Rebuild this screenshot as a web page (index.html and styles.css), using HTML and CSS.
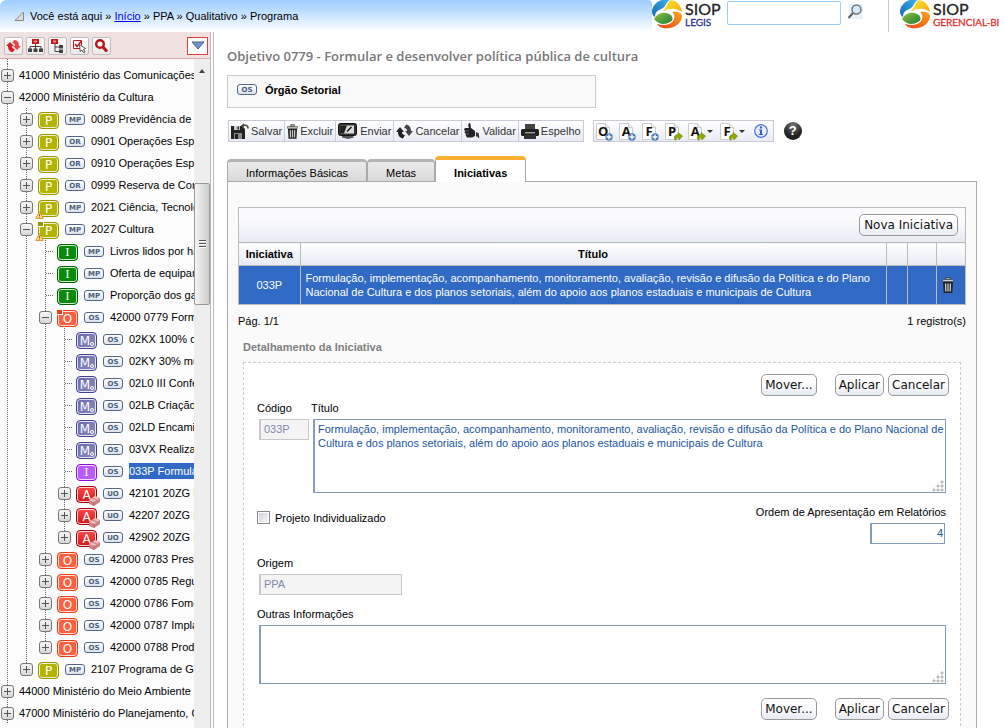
FILE: index.html
```html
<!DOCTYPE html>
<html lang="pt-BR">
<head>
<meta charset="utf-8">
<title>SIOP - Programa</title>
<link rel="stylesheet" href="styles.css">
</head>
<body>
<svg class="defs" aria-hidden="true">
  <defs>
    <linearGradient id="gBlue" x1="0" y1="1" x2="1" y2="0"><stop offset="0" stop-color="#1766b4"/><stop offset="1" stop-color="#39b6ea"/></linearGradient>
    <linearGradient id="gYellow" x1="0" y1="0" x2="1" y2="1"><stop offset="0" stop-color="#ffe93a"/><stop offset="1" stop-color="#f6a80e"/></linearGradient>
    <linearGradient id="gGreen" x1="0" y1="0" x2="1" y2="1"><stop offset="0" stop-color="#8cbf3a"/><stop offset="1" stop-color="#1f7f3a"/></linearGradient>
    <linearGradient id="gOrange" x1="1" y1="0" x2="0" y2="1"><stop offset="0" stop-color="#f9a51a"/><stop offset="1" stop-color="#e8401c"/></linearGradient>
    <symbol id="logo" viewBox="0 0 31 29">
      <path fill="url(#gBlue)" d="M18 0C9-2 1 3 0 11c0 3 1 5 3 6 0-6 4-7 8-9 3-2 3-6 7-8z"/>
      <path fill="url(#gYellow)" d="M19 0c6 1 10 5 11 12-4-3-8-4-12-3-3 0-5 2-7 2 3-2 4-9 8-11z"/>
      <path fill="url(#gGreen)" d="M2 19c3-5 9-8 15-5 4 2 5 6 1 8-5 3-11 3-16-3z"/>
      <path fill="url(#gOrange)" d="M20 12c5-1 10 1 10 4 0 7-8 14-19 12-3-1-5-2-6-4 7 2 13 1 16-3 2-3 2-7-1-9z"/>
    </symbol>
    <symbol id="trash" viewBox="0 0 12 16">
      <path fill="#bbb" stroke="#333" stroke-width=".8" d="M4 .6h4v2H4z"/><path fill="#ccc" stroke="#333" stroke-width=".6" d="M.5 2.500h11v2H.5z"/><path fill="#222" d="M1 5h10l-.7 11H1.700z"/><path stroke="#ccc" stroke-width="1.300" d="M3.600 6.500l.2 8M6 6.500v8M8.400 6.500l-.2 8"/>
    </symbol>
    <symbol id="warn" viewBox="0 0 9 8"><path fill="#ffe08a" stroke="#d99330" d="M4.500.8L8.300 7.400H.7z"/><path stroke="#a05a10" d="M4.500 3v2M4.500 5.600v1"/></symbol>
    <symbol id="brick" viewBox="0 0 11 10"><path fill="#cf8282" d="M0 4l6-4 5 2v4l-6 4-5-2z"/><path fill="#eebcbc" d="M0 4l6-4 5 2-6 4z"/><path fill="none" stroke="#b06060" stroke-width=".7" d="M5 6v4M3 2l5 2"/></symbol>
    <symbol id="page" viewBox="0 0 14 17"><path fill="#fff" stroke="#ccc" d="M.5.5h9l4 4v12H.5z"/><path fill="#eee" stroke="#ccc" d="M9.500.5v4h4"/></symbol>
    <symbol id="plus" viewBox="0 0 8 8"><circle cx="4" cy="4" r="3.700" fill="#4c79b5"/><path stroke="#fff" stroke-width="1.400" d="M4 1.500v5M1.500 4h5"/></symbol>
    <symbol id="arrow" viewBox="0 0 10 9"><path fill="#8aa800" stroke="#6b8500" stroke-width=".6" d="M5 .5L9.500 4 6 8V6C4 5.500 3 6.500 3 8.500 0 6 1 3 5 2.500z"/></symbol>
  </defs>
</svg>

<div class="page">
  <header class="top">
    <nav class="crumbs" aria-label="Você está aqui">
      <svg width="10" height="10" viewBox="0 0 10 10" aria-hidden="true"><path fill="#ddd" stroke="#888" d="M9.500 1v8.500H1z"/></svg>
      <span>Você está aqui » <a href="#">Início</a> » PPA » Qualitativo » Programa</span>
    </nav>
    <div class="brands">
      <a class="brand" href="#"><svg width="31" height="29" aria-hidden="true"><use href="#logo"/></svg><span class="brand-text">SIOP<small class="legis">LEGIS</small></span></a>
      <form class="search">
        <input type="text" aria-label="Pesquisar">
        <button type="button" aria-label="Buscar"><svg width="16" height="16" viewBox="0 0 16 16"><rect x="2" y="0" width="14" height="15" fill="#e6f2fc"/><circle cx="9.500" cy="5.500" r="4.500" fill="#d4eafb" stroke="#777" stroke-width="1.500"/><path stroke="#666" stroke-width="2.200" d="M6 9l-4.500 5"/></svg></button>
      </form>
      <a class="brand bi" href="#"><svg width="31" height="29" aria-hidden="true"><use href="#logo"/></svg><span class="brand-text">SIOP<small class="gerencial">GERENCIAL-BI</small></span></a>
    </div>
  </header>

  <div class="body">
    <aside class="side">
      <div class="side-bar">
        <button type="button" aria-label="Atualizar"><svg width="15" height="14" viewBox="0 0 15 14"><path fill="#d51f26" d="M0 7l4-4 4 4H6c0 2 1 3 3 3l-2 3C4 13 2 11 2 7z"/><path fill="#e2484d" d="M15 7l-4 4-4-4h2c0-2-1-3-3-3l2-3c3 0 5 2 5 6z"/></svg></button>
        <button type="button" aria-label="Expandir"><svg width="15" height="14" viewBox="0 0 15 14"><path fill="#c4161c" d="M4 0h7v5H4z"/><path stroke="#444" fill="none" d="M7.500 5v5M2 10V7.500h11V10"/><path fill="#444" d="M0 9.500h4V13H0zM5.500 9.500h4V13h-4zM11 9.500h4V13h-4z"/><path fill="#f08a8a" d="M6 1.500h3v2H6z"/></svg></button>
        <button type="button" aria-label="Recolher"><svg width="15" height="14" viewBox="0 0 15 14"><path fill="#c4161c" d="M1 0h7v5H1z"/><path stroke="#444" fill="none" d="M5 5v7.500h4M5 8h4"/><path fill="#444" d="M9 6h4v3.500H9zM9 10.500h4V14H9z"/><path fill="#f08a8a" d="M3 1.500h3v2H3z"/></svg></button>
        <button type="button" aria-label="Selecionar"><svg width="15" height="14" viewBox="0 0 15 14"><path fill="#fff" stroke="#c4161c" d="M1.500 1.500h8v8h-8z"/><path fill="none" stroke="#c4161c" stroke-width="1.600" d="M3 5l2 2.500L9.500 2"/><path fill="#fff" stroke="#333" stroke-width=".8" d="M7.500 5.500l6 4-2 .8 1.500 2.700-1.500.7-1.500-2.700-1.800 1.500z"/></svg></button>
        <button type="button" aria-label="Procurar"><svg width="15" height="14" viewBox="0 0 15 14"><circle cx="6" cy="5" r="3.800" fill="#fff" stroke="#b81218" stroke-width="2.400"/><path stroke="#b81218" stroke-width="3" d="M9 8l4 4.500"/></svg></button>
        <button type="button" class="menu" aria-label="Opções"><svg width="14" height="9" viewBox="0 0 14 9"><path fill="#6f95cf" stroke="#50617c" d="M1 1h12L7 8z"/></svg></button>
      </div>
      <div class="side-main">
        <ul class="tree">
          <li><div class="row"><button type="button" class="tg plus" aria-label="Expandir"></button><a href="#">41000 Ministério das Comunicações</a></div></li>
          <li><div class="row"><button type="button" class="tg" aria-label="Recolher"></button><a href="#">42000 Ministério da Cultura</a></div>
            <ul>
              <li><div class="row"><button type="button" class="tg plus" aria-label="Expandir"></button><b class="ic p">P</b><i class="tag">MP</i><a href="#">0089 Previdência de Inativos</a></div></li>
              <li><div class="row"><button type="button" class="tg plus" aria-label="Expandir"></button><b class="ic p">P</b><i class="tag">OR</i><a href="#">0901 Operações Especiais</a></div></li>
              <li><div class="row"><button type="button" class="tg plus" aria-label="Expandir"></button><b class="ic p">P</b><i class="tag">OR</i><a href="#">0910 Operações Especiais</a></div></li>
              <li><div class="row"><button type="button" class="tg plus" aria-label="Expandir"></button><b class="ic p">P</b><i class="tag">OR</i><a href="#">0999 Reserva de Contingência</a></div></li>
              <li><div class="row"><button type="button" class="tg plus" aria-label="Expandir"></button><b class="ic p">P<svg class="warn"><use href="#warn"/></svg></b><i class="tag">MP</i><a href="#">2021 Ciência, Tecnologia</a></div></li>
              <li><div class="row"><button type="button" class="tg" aria-label="Recolher"></button><b class="ic p open">P<svg class="warn"><use href="#warn"/></svg></b><i class="tag">MP</i><a href="#">2027 Cultura</a></div>
                <ul>
                  <li class="leaf"><div class="row"><b class="ic g">I</b><i class="tag">MP</i><a href="#">Livros lidos por habitante</a></div></li>
                  <li class="leaf"><div class="row"><b class="ic g">I</b><i class="tag">MP</i><a href="#">Oferta de equipamentos</a></div></li>
                  <li class="leaf"><div class="row"><b class="ic g">I</b><i class="tag">MP</i><a href="#">Proporção dos gastos</a></div></li>
                  <li><div class="row"><button type="button" class="tg" aria-label="Recolher"></button><b class="ic o open">O</b><i class="tag">OS</i><a href="#">42000 0779 Formular</a></div>
                    <ul>
                      <li class="leaf"><div class="row"><b class="ic m">M</b><i class="tag">OS</i><a href="#">02KX 100% dos</a></div></li>
                      <li class="leaf"><div class="row"><b class="ic m">M</b><i class="tag">OS</i><a href="#">02KY 30% municípios</a></div></li>
                      <li class="leaf"><div class="row"><b class="ic m">M</b><i class="tag">OS</i><a href="#">02L0 III Conferência</a></div></li>
                      <li class="leaf"><div class="row"><b class="ic m">M</b><i class="tag">OS</i><a href="#">02LB Criação</a></div></li>
                      <li class="leaf"><div class="row"><b class="ic m">M</b><i class="tag">OS</i><a href="#">02LD Encaminhar</a></div></li>
                      <li class="leaf"><div class="row"><b class="ic m">M</b><i class="tag">OS</i><a href="#">03VX Realização</a></div></li>
                      <li class="leaf"><div class="row"><b class="ic i">I</b><i class="tag">OS</i><a href="#" class="sel">033P Formulação</a></div></li>
                      <li><div class="row"><button type="button" class="tg plus" aria-label="Expandir"></button><b class="ic a">A<svg class="brick"><use href="#brick"/></svg></b><i class="tag">UO</i><a href="#">42101 20ZG Formulação</a></div></li>
                      <li><div class="row"><button type="button" class="tg plus" aria-label="Expandir"></button><b class="ic a">A<svg class="brick"><use href="#brick"/></svg></b><i class="tag">UO</i><a href="#">42207 20ZG Formulação</a></div></li>
                      <li><div class="row"><button type="button" class="tg plus" aria-label="Expandir"></button><b class="ic a">A<svg class="brick"><use href="#brick"/></svg></b><i class="tag">UO</i><a href="#">42902 20ZG Formulação</a></div></li>
                    </ul>
                  </li>
                  <li><div class="row"><button type="button" class="tg plus" aria-label="Expandir"></button><b class="ic o">O</b><i class="tag">OS</i><a href="#">42000 0783 Preservar</a></div></li>
                  <li><div class="row"><button type="button" class="tg plus" aria-label="Expandir"></button><b class="ic o">O</b><i class="tag">OS</i><a href="#">42000 0785 Regular</a></div></li>
                  <li><div class="row"><button type="button" class="tg plus" aria-label="Expandir"></button><b class="ic o">O</b><i class="tag">OS</i><a href="#">42000 0786 Fomentar</a></div></li>
                  <li><div class="row"><button type="button" class="tg plus" aria-label="Expandir"></button><b class="ic o">O</b><i class="tag">OS</i><a href="#">42000 0787 Implantar</a></div></li>
                  <li><div class="row"><button type="button" class="tg plus" aria-label="Expandir"></button><b class="ic o">O</b><i class="tag">OS</i><a href="#">42000 0788 Produzir</a></div></li>
                </ul>
              </li>
              <li><div class="row"><button type="button" class="tg plus" aria-label="Expandir"></button><b class="ic p">P</b><i class="tag">MP</i><a href="#">2107 Programa de Gestão</a></div></li>
            </ul>
          </li>
          <li><div class="row"><button type="button" class="tg plus" aria-label="Expandir"></button><a href="#">44000 Ministério do Meio Ambiente</a></div></li>
          <li><div class="row"><button type="button" class="tg plus" aria-label="Expandir"></button><a href="#">47000 Ministério do Planejamento, Orçamento</a></div></li>
        </ul>
        <div class="scroll" aria-hidden="true">
          <span class="up"></span>
          <span class="thumb"><span class="grip"></span></span>
        </div>
      </div>
    </aside>

    <main class="main">
      <h1>Objetivo 0779 - Formular e desenvolver política pública de cultura</h1>
      <div class="org"><i class="tag">OS</i><strong>Órgão Setorial</strong></div>

      <div class="bars">
        <div class="bar">
          <button type="button"><svg width="18" height="16" viewBox="0 0 18 16"><path fill="#222" d="M0 3h11l3 3v10H0z"/><path fill="#ccc" d="M3 3h6v4H3z"/><path fill="#222" d="M6.500 3.500h1.500v3H6.500z"/><path fill="#888" d="M3 10h8v6H3z"/><path fill="#222" d="M4 11h3v5H4z"/><path fill="none" stroke="#555" stroke-width="1.800" d="M12 2.500c3-1 5 0 5 3"/><path fill="#555" d="M9.500 3L13 0v5z"/></svg>Salvar</button>
          <button type="button"><svg width="11" height="15"><use href="#trash"/></svg>Excluir</button>
          <button type="button"><svg width="20" height="16" viewBox="0 0 20 16"><rect x=".5" y=".5" width="18" height="12" rx="2" fill="#333" stroke="#111"/><rect x="3" y="2.500" width="13" height="8" fill="#ddd"/><path fill="#222" d="M3 2.500h6l-3 8H3z"/><path stroke="#111" stroke-width="1.500" d="M9 8.500L13.500 4"/><path fill="#555" d="M4 13h11l1 1.500-6 1.500-6-1.500z"/></svg>Enviar</button>
          <button type="button"><svg width="17" height="15" viewBox="0 0 17 15"><path fill="#222" d="M0 8l4-5 4 5H6c0 2 1 3 3 3l-2 3.500C4 14 2 12 2 8z"/><path fill="#444" d="M17 7l-4 5-4-5h2c0-2-1-3-3-3l2-3.500c3 .5 5 2.500 5 6.500z"/></svg>Cancelar</button>
          <button type="button"><svg width="16" height="16" viewBox="0 0 16 16"><path fill="#222" d="M5 0c2 0 1.500 3 2 5l4 3v5l-3 1.500H3L1.500 12l.5-1-1.500-1.500L1 8 0 6.500 1 5h4C4 3 4 1 5 0z"/><path fill="#333" d="M12 9l2.500 1 .8 4-1 1.500-.8-2h-1.500z"/><path stroke="#888" stroke-width=".6" d="M1 8h4M2 11h3"/></svg>Validar</button>
          <button type="button"><svg width="18" height="15" viewBox="0 0 18 15"><path fill="#444" d="M4 0h10v5H4z"/><rect x="0" y="5" width="18" height="7" rx="1.500" fill="#222"/><path fill="#999" d="M4 8h10v1.500H4z"/><path fill="#333" d="M3 11h12v4H3z"/></svg>Espelho</button>
        </div>
        <div class="bar docs">
          <button type="button" class="doc"><svg width="14" height="17"><use href="#page"/></svg><b>O</b><svg class="mark"><use href="#plus"/></svg></button>
          <button type="button" class="doc"><svg width="14" height="17"><use href="#page"/></svg><b>A</b><svg class="mark"><use href="#plus"/></svg></button>
          <button type="button" class="doc"><svg width="14" height="17"><use href="#page"/></svg><b>F</b><svg class="mark"><use href="#plus"/></svg></button>
          <button type="button" class="doc"><svg width="14" height="17"><use href="#page"/></svg><b>P</b><svg class="mark go"><use href="#arrow"/></svg></button>
          <button type="button" class="doc drop"><svg width="14" height="17"><use href="#page"/></svg><b>A</b><svg class="mark go"><use href="#arrow"/></svg></button>
          <button type="button" class="doc drop"><svg width="14" height="17"><use href="#page"/></svg><b>F</b><svg class="mark go"><use href="#arrow"/></svg></button>
          <button type="button" class="info" aria-label="Informações"><svg width="14" height="14" viewBox="0 0 14 14"><circle cx="7" cy="7" r="6.300" fill="#e9edf8" stroke="#4a6fe0" stroke-width="1.200"/><path fill="#2f5be0" d="M6 2.500h2v2H6zM5 5.500h3V10h1v1H5v-1h1V6.500H5z"/></svg></button>
        </div>
        <button type="button" class="help" aria-label="Ajuda">?</button>
      </div>

      <nav class="tabs">
        <button type="button">Informações Básicas</button>
        <button type="button">Metas</button>
        <button type="button" class="on">Iniciativas</button>
      </nav>

      <section class="panel">
        <div class="grid">
          <div class="grid-top"><button type="button" class="btn">Nova Iniciativa</button></div>
          <table>
            <colgroup><col class="c-code"><col><col class="c-a"><col class="c-b"><col class="c-b"></colgroup>
            <thead><tr><th>Iniciativa</th><th>Título</th><th></th><th></th><th></th></tr></thead>
            <tbody><tr>
              <td class="code">033P</td>
              <td class="name">Formulação, implementação, acompanhamento, monitoramento, avaliação, revisão e difusão da Política e do Plano Nacional de Cultura e dos planos setoriais, além do apoio aos planos estaduais e municipais de Cultura</td>
              <td></td><td></td>
              <td class="del"><button type="button" aria-label="Excluir iniciativa"><svg width="12" height="16"><use href="#trash"/></svg></button></td>
            </tr></tbody>
          </table>
        </div>
        <div class="pager"><span>Pág. 1/1</span><span>1 registro(s)</span></div>

        <h2>Detalhamento da Iniciativa</h2>
        <form class="detail">
          <div class="actions"><button type="button" class="btn away">Mover...</button><button type="button" class="btn">Aplicar</button><button type="button" class="btn">Cancelar</button></div>
          <div class="line first">
            <div class="field code-field"><label for="codigo">Código</label><input id="codigo" type="text" value="033P" disabled></div>
            <div class="field grow"><label for="titulo">Título</label><span class="area"><textarea id="titulo" class="tall">Formulação, implementação, acompanhamento, monitoramento, avaliação, revisão e difusão da Política e do Plano Nacional de Cultura e dos planos setoriais, além do apoio aos planos estaduais e municipais de Cultura</textarea></span></div>
          </div>
          <div class="line spread">
            <label class="check"><input type="checkbox">Projeto Individualizado</label>
            <div class="field order"><label for="ordem">Ordem de Apresentação em Relatórios</label><input id="ordem" type="text" value="4"></div>
          </div>
          <div class="line"><div class="field origin"><label for="origem">Origem</label><input id="origem" type="text" value="PPA" disabled></div></div>
          <div class="line"><div class="field grow"><label for="outras">Outras Informações</label><span class="area"><textarea id="outras" class="short"></textarea></span></div></div>
          <div class="actions bottom"><button type="button" class="btn away">Mover...</button><button type="button" class="btn">Aplicar</button><button type="button" class="btn">Cancelar</button></div>
        </form>
      </section>
    </main>
  </div>
</div>
</body>
</html>
```
FILE: styles.css
```css
*, *::before, *::after { box-sizing: border-box; }
body { margin: 0; background: #fff; color: #000; font: 11px/14px "Liberation Sans", Arial, sans-serif; }
button, input, textarea { font: inherit; margin: 0; border-radius: 0; }
button { padding: 0; border: 0; background: none; color: inherit; }
svg { display: block; flex: none; }
.defs { position: absolute; width: 0; height: 0; }

.page { display: flex; flex-direction: column; height: 100vh; overflow: hidden; }

/* Header */
.top { display: flex; flex: none; height: 32px; }
.crumbs { flex: 1; display: flex; align-items: center; gap: 6px; padding-left: 14px; border-radius: 6px 4px 0 0; background: linear-gradient(#9dcdff, #a9d3ff 15%, #fff); }
.crumbs a { color: #00f; }
.brands { display: flex; align-items: flex-start; width: 352px; }
.brand { display: flex; gap: 2px; color: #222; text-decoration: none; }
.brand-text { display: flex; flex-direction: column; padding-top: 1px; font: 16px/16px Lato, sans-serif; -webkit-text-stroke: 0.3px; }
.brand-text small { font-size: 10px; line-height: 10px; }
.legis { color: #2b2f9c; }
.gerencial { color: #e8322d; }
.search { display: flex; align-items: flex-start; gap: 6px; padding: 1px 0 0 6px; flex: 1; justify-content: flex-end; margin-right: 25px; }
.search input { width: 114px; height: 24px; border: 1px solid #99ccff; border-radius: 2px; background: #fff; }
.search button { padding-top: 3px; }
.bi { width: 116px; height: 32px; padding-left: 11px; border-left: 1px solid #b9ced4; }

.body { flex: 1; min-height: 0; display: flex; }

/* Side tree */
.side { width: 214px; flex: none; display: flex; flex-direction: column; border-right: 4px double #bbb; background: #fcfcfc; }
.side-bar { display: flex; align-items: center; gap: 3px; height: 27px; padding: 1px 2px 0 4px; background: #f1e2e2; border-bottom: 1px solid #e3a9a9; }
.side-bar button { display: grid; place-items: center; width: 19px; height: 18px; border: 1px solid #c4bcbc; border-radius: 2px; background: linear-gradient(#fff, #e9e9e9); }
.side-bar .menu { margin-left: auto; width: 21px; border-color: #e63c3c; border-radius: 0; background: #fff; }
.side-main { flex: 1; min-height: 0; display: flex; }
.tree, .tree ul { margin: 0; padding: 0; list-style: none; }
.tree { flex: 1; min-width: 0; overflow: hidden; padding-top: 5px; background: repeating-linear-gradient(#666 0 1px, transparent 1px 2px) 7px 0 / 1px 6px no-repeat; }
.tree ul { padding-left: 19px; }
.tree li { background: repeating-linear-gradient(#666 0 1px, transparent 1px 2px) 7px 0 / 1px 100% no-repeat; }
.tree ul > li:last-child { background-size: 1px 12px; }
.row { display: flex; align-items: center; height: 22px; white-space: nowrap; }
.row a { color: #000; text-decoration: none; line-height: 16px; padding-right: 40px; }
.row a.sel { background: #316ac5; color: #fff; }
.leaf > .row { padding-left: 19px; background: repeating-linear-gradient(90deg, #666 0 1px, transparent 1px 2px) 8px 11px / 8px 1px no-repeat; }
.tg { width: 13px; height: 13px; margin: 0 5px 0 1px; flex: none; border: 1px solid #777; border-radius: 3px; background: linear-gradient(#555, #555) center / 7px 1px no-repeat, linear-gradient(#f6f6f6, #d8d8d8); }
.tg.plus { background: linear-gradient(#555, #555) center / 7px 1px no-repeat, linear-gradient(#555, #555) center / 1px 7px no-repeat, linear-gradient(#f6f6f6, #d8d8d8); }
.ic { position: relative; flex: none; width: 21px; height: 17px; margin: 2px 6px 0 0; border: 1px solid; border-radius: 4px; box-shadow: inset 0 0 0 1px #ffffffcc; color: #fff; font: 12px/16px "DejaVu Sans", sans-serif; text-align: center; }
.p { border-color: #989a00; background: #b4b400; }
.g { border-color: #006000; background: #0a8a0a; font-family: "DejaVu Serif", serif; font-size: 11px; }
.o { border-color: #f03c14; background: #ff6040; }
.m { border-color: #44448c; background: linear-gradient(135deg, #6a6aae, #8a8abf); padding-right: 3px; }
.i { border-color: #9010e0; background: #b95cff; font-family: "DejaVu Serif", serif; font-size: 11px; }
.a { border-color: #a00010; background: linear-gradient(#ff4a4a, #d01818); }
.m::after { content: ""; position: absolute; right: 2px; bottom: 2px; width: 4px; height: 4px; border: 1px solid #fff; border-radius: 2px; }
.open::before { content: ""; position: absolute; left: -1px; top: -1px; width: 6px; height: 5px; border-right: 1px solid #fff; border-bottom: 1px solid #fff; }
.p.open::before { background: #989a00; }
.o.open::before { background: #f03c14; }
.warn { position: absolute; left: -4px; bottom: -3px; width: 9px; height: 8px; }
.brick { position: absolute; right: -4px; bottom: -4px; width: 11px; height: 10px; }
.tag { flex: none; width: 20px; height: 11px; margin-right: 6px; border: 1px solid #52678a; border-radius: 3px; background: linear-gradient(#fff, #dde3ea); color: #4a6080; font: bold 7px/10px "DejaVu Sans", sans-serif; text-align: center; }
.scroll { width: 16px; flex: none; background: #eee; }
.scroll .up { display: block; width: 0; margin: 10px 0 0 5px; border: 3px solid transparent; border-top: 0; border-bottom: 4px solid #444; }
.scroll .thumb { display: grid; place-items: center; height: 122px; margin-top: 110px; border: 1px solid #999; border-radius: 2px; background: linear-gradient(90deg, #f4f4f4, #cfcfcf); }
.scroll .grip { width: 7px; height: 8px; background: repeating-linear-gradient(#555 0 1px, #fff 1px 2px, transparent 2px 3px); }

/* Main column */
.main { flex: 1; min-width: 0; overflow: auto; scrollbar-width: none; padding: 15px 27px 20px 13px; }
h1 { margin: 0; color: #777; font: 600 13px/18px "Open Sans", sans-serif; }
.org { display: flex; align-items: center; gap: 2px; width: 369px; height: 33px; margin-top: 10px; padding: 0 9px 4px; border: 1px solid #ccc; background: #f9f9f9; }
.bars { display: flex; align-items: center; margin-top: 12px; padding-left: 1px; }
.bar { display: flex; height: 22px; border: 1px solid #c9ccd4; background: linear-gradient(#fff, #e8ebf3); color: #333; }
.bar > button { display: flex; align-items: center; gap: 2px; padding: 0 2px; }
.bar:not(.docs) > button + button { border-left: 1px solid #c9ccd4; }
.docs { margin-left: 9px; padding: 0 3px 0 2px; }
.bar > .doc { position: relative; width: 23px; padding: 0; }
.doc > b { position: absolute; left: 2px; top: 2px; width: 11px; font: bold 13px/16px "Open Sans", sans-serif; color: #111; text-align: center; }
.mark { position: absolute; left: 9px; bottom: 0; width: 8px; height: 8px; }
.mark.go { width: 10px; height: 9px; left: 8px; }
.bar > .drop { width: 32px; }
.drop::after { content: ""; width: 6px; height: 3px; margin-left: 3px; border: 3px solid transparent; border-top-color: #333; border-bottom: 0; }
.help { width: 18px; height: 18px; margin-left: 10px; border-radius: 9px; background: radial-gradient(circle at 50% 20%, #777, #222 60%); color: #fff; font: bold 13px/18px "Liberation Sans", sans-serif; }

.tabs { display: flex; align-items: flex-end; height: 25px; margin-top: 14px; }
.tabs button { height: 22px; padding: 3px 18px 0; border: 1px solid #aaa; border-bottom: 0; border-top: 3px solid #b5b5b5; border-radius: 4px 4px 0 0; background: linear-gradient(#ebebeb, #d9d9d9); }
.tabs .on { height: 26px; margin-bottom: -1px; padding-top: 4px; border-top: 4px solid #fbb034; background: #fff; font-weight: bold; z-index: 1; }
.panel { border: 1px solid #aaa; background: #fafafa; padding: 25px 10px 20px; }

.btn { height: 22px; padding: 0 4px; border: 1px solid #999; border-radius: 5px; background: linear-gradient(#fff 40%, #e6eaf2); font: 12px/20px "DejaVu Sans", Verdana, sans-serif; color: #111; }
.grid { border: 1px solid #bbb; }
.grid-top { display: flex; justify-content: flex-end; height: 34px; padding: 6px 7px; background: linear-gradient(#fbfbfd 35%, #e6eaf3); }
table { width: 100%; border-collapse: collapse; table-layout: fixed; }
th { height: 23px; padding: 0; border: 1px solid #bbb; border-width: 1px 0 1px 1px; background: linear-gradient(#fff, #e6eaf3); }
td { height: 38px; padding: 0; border-left: 1px solid #bbb; background: #316ac5; color: #fff; }
th:first-child, td:first-child { border-left: 0; }
.c-code { width: 61px; } .c-a { width: 21px; } .c-b { width: 29px; }
.code { text-align: center; }
.name { padding: 0 8px 0 5px; }
.del button { display: block; margin-left: 5px; }
.pager { display: flex; justify-content: space-between; margin-top: 9px; }
h2 { margin: 12px 5px 8px; color: #808080; font-size: 11px; line-height: 14px; }
.detail { margin: 0 5px; padding: 11px 14px 20px 13px; border: 1px dashed #ccc; background: #fff; }

.actions { display: flex; justify-content: flex-end; gap: 4px; margin-right: -3px; }
.actions .btn { padding: 0 3px; }
.actions .away { margin-right: 14px; }
.bottom { margin-top: 14px; }
.line { display: flex; gap: 2px; margin-top: 12px; }
.first { margin-top: 5px; }
.spread { justify-content: space-between; }
.field { display: flex; flex-direction: column; gap: 4px; }
.field input, .area { margin-left: 2px; }
.grow { flex: 1; min-width: 0; }
.field input, textarea { border: 1px solid #849db8; border-left-width: 2px; background: #fff; color: #1a56a0; padding: 1px 3px; outline: 0; }
.field input { height: 21px; }
.field input:disabled { border-color: #c8c8c8; background: #f4f4f4; color: #8088ae; }
.code-field { width: 52px; }
.origin { width: 145px; }
.area { display: grid; position: relative; }
textarea { display: block; width: 100%; resize: none; padding-right: 0; }
.tall { height: 74px; padding-top: 2px; }
.short { height: 59px; }
.area::after { content: ""; position: absolute; right: 2px; bottom: 1px; width: 12px; height: 12px; background: radial-gradient(circle, #bbb 0 1px, transparent 2px) 0 0 / 4px 4px; clip-path: polygon(100% 0, 100% 100%, 0 100%, 0 67%, 34% 67%, 34% 34%, 67% 34%, 67% 0); }
.order { align-items: flex-end; }
.order input { width: 75px; padding-right: 1px; margin-right: 1px; text-align: right; }
.check { display: flex; align-items: center; gap: 5px; height: 14px; margin-top: 6px; }
.check input { appearance: none; width: 13px; height: 13px; border: 1px solid #8a8a8a; background: linear-gradient(135deg, #c8ccd2, #fff); box-shadow: inset 0 0 0 1px #fff; }
```
